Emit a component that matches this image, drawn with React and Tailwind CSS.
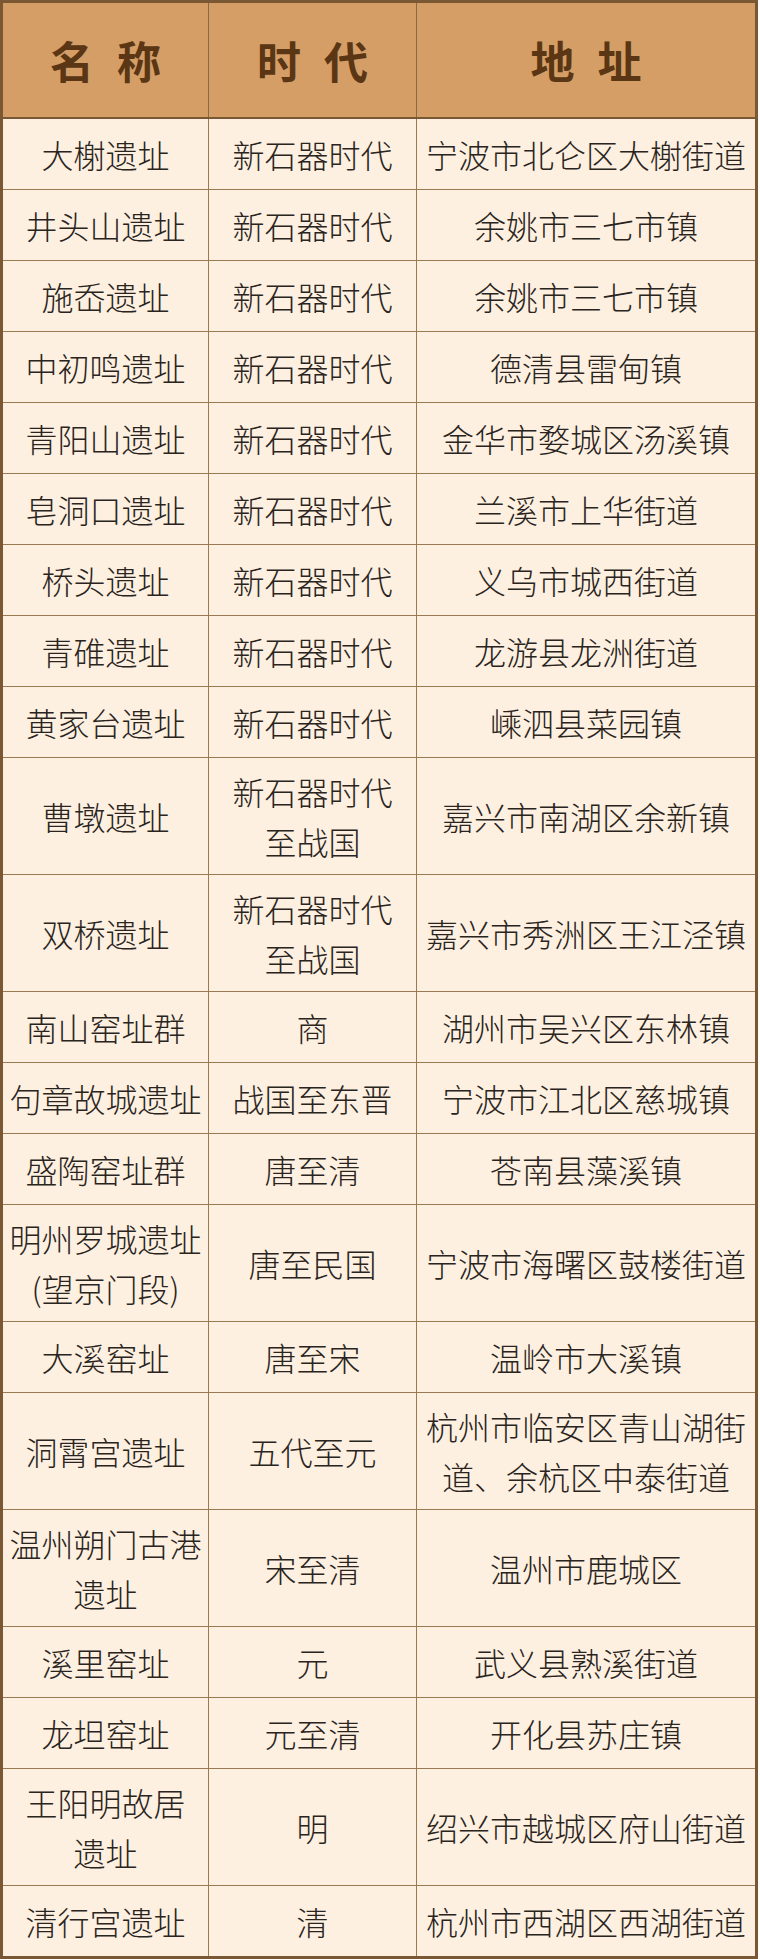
import React from 'react';

// 名称 / 时代 / 地址 列表（多行单元格用数组表示换行）
const rows = [
    { name: '大榭遗址', era: '新石器时代', addr: '宁波市北仑区大榭街道' },
    { name: '井头山遗址', era: '新石器时代', addr: '余姚市三七市镇' },
    { name: '施岙遗址', era: '新石器时代', addr: '余姚市三七市镇' },
    { name: '中初鸣遗址', era: '新石器时代', addr: '德清县雷甸镇' },
    { name: '青阳山遗址', era: '新石器时代', addr: '金华市婺城区汤溪镇' },
    { name: '皂洞口遗址', era: '新石器时代', addr: '兰溪市上华街道' },
    { name: '桥头遗址', era: '新石器时代', addr: '义乌市城西街道' },
    { name: '青碓遗址', era: '新石器时代', addr: '龙游县龙洲街道' },
    { name: '黄家台遗址', era: '新石器时代', addr: '嵊泗县菜园镇' },
    { name: '曹墩遗址', era: ['新石器时代', '至战国'], addr: '嘉兴市南湖区余新镇' },
    { name: '双桥遗址', era: ['新石器时代', '至战国'], addr: '嘉兴市秀洲区王江泾镇' },
    { name: '南山窑址群', era: '商', addr: '湖州市吴兴区东林镇' },
    { name: '句章故城遗址', era: '战国至东晋', addr: '宁波市江北区慈城镇' },
    { name: '盛陶窑址群', era: '唐至清', addr: '苍南县藻溪镇' },
    { name: ['明州罗城遗址', '(望京门段)'], era: '唐至民国', addr: '宁波市海曙区鼓楼街道' },
    { name: '大溪窑址', era: '唐至宋', addr: '温岭市大溪镇' },
    { name: '洞霄宫遗址', era: '五代至元', addr: ['杭州市临安区青山湖街', '道、余杭区中泰街道'] },
    { name: ['温州朔门古港', '遗址'], era: '宋至清', addr: '温州市鹿城区' },
    { name: '溪里窑址', era: '元', addr: '武义县熟溪街道' },
    { name: '龙坦窑址', era: '元至清', addr: '开化县苏庄镇' },
    { name: ['王阳明故居', '遗址'], era: '明', addr: '绍兴市越城区府山街道' },
    { name: '清行宫遗址', era: '清', addr: '杭州市西湖区西湖街道' },
];

const isMulti = (r) => Array.isArray(r.name) || Array.isArray(r.era) || Array.isArray(r.addr);

function Cell({ value, last }) {
    const lines = Array.isArray(value) ? value : [value];
    return (
        <div className={`flex flex-col items-center justify-center text-center px-[2px] ${last ? '' : 'border-r border-[#9a7a52]'}`}>
            {lines.map((l, i) => (
                <span key={i} className="block whitespace-nowrap">{l}</span>
            ))}
        </div>
    );
}

export default function App() {
    return (
        <div className="bg-white min-h-[1959px]" style={{ fontFamily: '"Noto Sans CJK SC", "Noto Sans", sans-serif' }}>
            <div className="w-[758px] border-[3px] border-[#7a5834] bg-[#fdf0e0]">
                {/* 表头 */}
                <div className="grid grid-cols-[206px_208px_1fr] h-[116px] bg-[#d49e66] border-b-2 border-[#7a5834] text-[#5a3614] font-bold text-[44px] leading-none">
                    <div className="flex items-center justify-center border-r border-[#8a6a44]">
                        <span className="tracking-[23px] pl-[23px]">名称</span>
                    </div>
                    <div className="flex items-center justify-center border-r border-[#8a6a44]">
                        <span className="tracking-[23px] pl-[23px]">时代</span>
                    </div>
                    <div className="flex items-center justify-center">
                        <span className="tracking-[23px] pl-[23px]">地址</span>
                    </div>
                </div>

                {/* 内容 */}
                {rows.map((r, idx) => {
                    const last = idx === rows.length - 1;
                    const h = isMulti(r) ? 'h-[117px]' : 'h-[71px]';
                    return (
                        <div
                            key={idx}
                            className={`grid grid-cols-[206px_208px_1fr] ${last ? 'h-[70px]' : `${h} border-b border-[#9a7a52]`} text-[32px] leading-[50px] font-light text-[#2a2420]`}
                        >
                            <Cell value={r.name} />
                            <Cell value={r.era} />
                            <Cell value={r.addr} last />
                        </div>
                    );
                })}
            </div>
        </div>
    );
}
